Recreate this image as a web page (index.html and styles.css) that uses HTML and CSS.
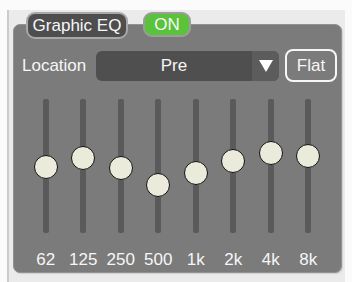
FILE: index.html
```html
<!DOCTYPE html>
<html lang="en">
<head>
    <meta charset="UTF-8">
    <meta name="viewport" content="width=device-width, initial-scale=1.0">
    <title>Graphic EQ</title>
    <link rel="stylesheet" href="styles.css">
</head>
<body>
    <div class="frame">
        <!-- Tabs -->
        <div class="tabs">
            <div class="tab">Graphic EQ</div>
            <div class="tab tab-on">ON</div>
        </div>

        <div class="panel">
            <!-- Location -->
            <div class="location-row">
                <span class="label">Location</span>
                <div class="select">
                    <span class="select-value">Pre</span>
                    <span class="select-arrow">
                        <svg width="14" height="12" viewBox="0 0 14 12"><polygon points="0,0 14,0 7,12" fill="#fff"/></svg>
                    </span>
                </div>
                <button class="flat">Flat</button>
            </div>

            <!-- Sliders -->
            <div class="bands">
                <div class="band"><div class="track"><div class="knob" style="top: 68px"></div></div><span>62</span></div>
                <div class="band"><div class="track"><div class="knob" style="top: 59px"></div></div><span>125</span></div>
                <div class="band"><div class="track"><div class="knob" style="top: 69px"></div></div><span>250</span></div>
                <div class="band"><div class="track"><div class="knob" style="top: 86px"></div></div><span>500</span></div>
                <div class="band"><div class="track"><div class="knob" style="top: 74px"></div></div><span>1k</span></div>
                <div class="band"><div class="track"><div class="knob" style="top: 62px"></div></div><span>2k</span></div>
                <div class="band"><div class="track"><div class="knob" style="top: 54px"></div></div><span>4k</span></div>
                <div class="band"><div class="track"><div class="knob" style="top: 57px"></div></div><span>8k</span></div>
            </div>
        </div>
    </div>
</body>
</html>
```

FILE: styles.css
```css
body {
    margin: 0;
    background-color: #fbfbfb;
    font-family: "Liberation Sans", Arial, sans-serif;
    color: #f6f6f6;
}
.frame {
    margin: 10px 0 0 7px;
    height: 272px;
    width: 338px;
    border-left: 2px solid #cbcbcb;
    background-color: #ebebeb;
    padding: 2px 0 0 4px;
    box-sizing: border-box;
}
.tabs {
    display: flex;
    gap: 15px;
    padding-left: 13px;
    position: relative;
    z-index: 1;
    margin-bottom: -15px;
}
.tab {
    height: 27px;
    box-sizing: border-box;
    border: 2px solid #a8a8a8;
    border-radius: 9px;
    background-color: #4e4e4e;
    font-size: 17px;
    line-height: 23px;
    width: 102px;
    text-align: center;
    white-space: nowrap;
}
.tab-on {
    width: 48px;
    height: 25px;
    line-height: 21px;
    background-color: #5bc23c;
    border-color: #9c9c9c;
}
.panel {
    width: 329px;
    height: 249px;
    box-sizing: border-box;
    background-color: #7b7b7b;
    border: 1px solid #929292;
    border-radius: 7px;
    box-shadow: 1px 1px 1px rgba(0, 0, 0, 0.12);
    padding-top: 24px;
}
.location-row {
    display: flex;
    align-items: center;
    height: 33px;
    padding-left: 8px;
}
.label {
    font-size: 17px;
    width: 66px;
    margin-right: 8px;
    white-space: nowrap;
}
.select {
    display: flex;
    width: 183px;
    height: 30px;
    border-radius: 6px;
    background-color: #4f4f4f;
    overflow: hidden;
}
.select-value {
    flex: 1;
    text-align: center;
    font-size: 17px;
    line-height: 30px;
}
.select-arrow {
    width: 27px;
    background-color: #5c5c5c;
    display: flex;
    align-items: center;
    justify-content: center;
}
.flat {
    margin-left: 6px;
    width: 52px;
    height: 33px;
    border: 2px solid #f6f6f6;
    border-radius: 8px;
    background: transparent;
    color: #f6f6f6;
    font-family: inherit;
    font-size: 17px;
    padding: 0;
}
.bands {
    display: grid;
    grid-template-columns: repeat(8, 37.5px);
    margin: 17px 0 0 13px;
}
.band {
    display: flex;
    flex-direction: column;
    align-items: center;
}
.track {
    position: relative;
    width: 6px;
    height: 134px;
    background-color: #5a5a5a;
    border-radius: 2px;
}
.knob {
    position: absolute;
    left: 50%;
    width: 22px;
    height: 22px;
    margin: -12px 0 0 -12px;
    border: 1.5px solid #111;
    border-radius: 50%;
    background-color: #ebebdc;
}
.band span {
    margin-top: 17px;
    font-size: 17px;
    line-height: 20px;
    white-space: nowrap;
}
```
